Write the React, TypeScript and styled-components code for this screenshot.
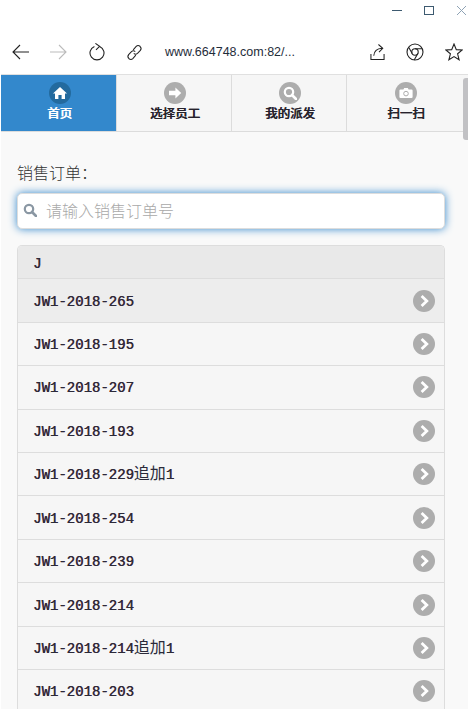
import React from "react";
import styled, { createGlobalStyle } from "styled-components";

const orders = [
  { code: "JW1-2018-265" },
  { code: "JW1-2018-195" },
  { code: "JW1-2018-207" },
  { code: "JW1-2018-193" },
  { code: "JW1-2018-229", extra: "追加" },
  { code: "JW1-2018-254" },
  { code: "JW1-2018-239" },
  { code: "JW1-2018-214" },
  { code: "JW1-2018-214", extra: "追加" },
  { code: "JW1-2018-203" },
];

const HomeIcon = () => (
  <svg width="14" height="14" viewBox="0 0 14 14">
    <path d="M7 1 L14 7.6 L12 7.6 L12 13 L8.6 13 L8.6 9 L5.4 9 L5.4 13 L2 13 L2 7.6 L0 7.6 Z" fill="#fff" />
  </svg>
);

const ArrowIcon = () => (
  <svg width="14" height="14" viewBox="0 0 14 14">
    <path d="M7.4 1.4 L13.2 7 L7.4 12.6 L7.4 9.2 L1 9.2 L1 4.8 L7.4 4.8 Z" fill="#fff" />
  </svg>
);

const SearchIcon = ({ size = 14, color = "#fff" }: { size?: number; color?: string }) => (
  <svg width={size} height={size} viewBox="0 0 14 14">
    <circle cx="6" cy="6" r="4.2" fill="none" stroke={color} strokeWidth="2.2" />
    <path d="M9 9 L13 13" stroke={color} strokeWidth="2.6" strokeLinecap="round" />
  </svg>
);

const CameraIcon = () => (
  <svg width="14" height="14" viewBox="0 0 14 14">
    <path d="M1.5 3.4 H4.4 L5.2 2 H8.8 L9.6 3.4 H12.5 Q13.6 3.4 13.6 4.5 V11 Q13.6 12 12.5 12 H1.5 Q0.4 12 0.4 11 V4.5 Q0.4 3.4 1.5 3.4 Z" fill="#fff" />
    <circle cx="7" cy="7.6" r="2.3" fill="none" stroke="#adadad" strokeWidth="1" />
  </svg>
);

const Chevron = () => (
  <svg width="14" height="14" viewBox="0 0 14 14">
    <path d="M4.6 2 L9.8 7 L4.6 12" fill="none" stroke="#fff" strokeWidth="2.8" />
  </svg>
);

export default function App() {
  return (
    <Page>
      <GlobalStyle />
      <WindowBar>
        <svg width="76" height="14" viewBox="0 0 76 14">
          <path d="M0 6.5 H10" stroke="#3d5a70" strokeWidth="1" />
          <rect x="32.5" y="2.5" width="9" height="8" fill="none" stroke="#3d5a70" strokeWidth="1" />
          <path d="M65 2 L74 11 M74 2 L65 11" stroke="#8fa3b5" strokeWidth="1" />
        </svg>
      </WindowBar>
      <Toolbar>
        <ToolIcon>
          <svg width="17" height="16" viewBox="0 0 17 16">
            <path d="M17 8 H1 M8 1 L1 8 L8 15" fill="none" stroke="#222" strokeWidth="1.1" />
          </svg>
        </ToolIcon>
        <ToolIcon>
          <svg width="17" height="16" viewBox="0 0 17 16">
            <path d="M0 8 H16 M9 1 L16 8 L9 15" fill="none" stroke="#bbb" strokeWidth="1.1" />
          </svg>
        </ToolIcon>
        <ToolIcon>
          <svg width="16" height="18" viewBox="0 0 16 18">
            <path d="M10.6 3.4 A7 7 0 1 1 5.4 3.4" fill="none" stroke="#222" strokeWidth="1.1" />
            <path d="M6.4 0.4 L10.6 3.4 L7 6.8" fill="none" stroke="#222" strokeWidth="1.1" />
          </svg>
        </ToolIcon>
        <ToolIcon>
          <svg width="17" height="17" viewBox="0 0 18 18">
            <path d="M7.6 6.2 L10.8 2.6 Q12.6 0.8 14.8 2.4 Q17 4.4 15.2 6.8 L12.2 10 Q10.2 11.6 8.2 10" fill="none" stroke="#222" strokeWidth="1.1" />
            <path d="M10.4 11.8 L7.2 15.4 Q5.4 17.2 3.2 15.6 Q1 13.6 2.8 11.2 L5.8 8 Q7.8 6.4 9.8 8" fill="none" stroke="#222" strokeWidth="1.1" />
          </svg>
        </ToolIcon>
        <Address>www.664748.com:82/...</Address>
        <ToolActions>
          <svg width="15" height="18" viewBox="0 0 16 18">
            <path d="M1 11 V17 H15 V11" fill="none" stroke="#222" strokeWidth="1.1" />
            <path d="M4 13 Q4.5 5.5 13 5 M9 1 L13.6 5 L9.6 9.2" fill="none" stroke="#222" strokeWidth="1.1" />
          </svg>
          <svg width="18" height="18" viewBox="0 0 18 18">
            <circle cx="9" cy="9" r="8" fill="none" stroke="#222" strokeWidth="1.1" />
            <circle cx="9" cy="9" r="3.2" fill="none" stroke="#222" strokeWidth="1.1" />
            <path d="M9 5.8 H16 M6.2 10.6 L2.8 4.4 M11.8 10.6 L8.2 17" fill="none" stroke="#222" strokeWidth="1.1" />
          </svg>
          <svg width="18" height="18" viewBox="0 0 18 18">
            <path d="M9 1 L11.3 6.6 L17.2 7 L12.6 10.8 L14.1 16.8 L9 13.6 L3.9 16.8 L5.4 10.8 L0.8 7 L6.7 6.6 Z" fill="none" stroke="#222" strokeWidth="1.1" />
          </svg>
        </ToolActions>
      </Toolbar>

      <Scrollbar />

      <NavBar>
        <NavItem $active>
          <NavIcon $active>
            <HomeIcon />
          </NavIcon>
          首页
        </NavItem>
        <NavItem>
          <NavIcon>
            <ArrowIcon />
          </NavIcon>
          选择员工
        </NavItem>
        <NavItem>
          <NavIcon>
            <SearchIcon />
          </NavIcon>
          我的派发
        </NavItem>
        <NavItem>
          <NavIcon>
            <CameraIcon />
          </NavIcon>
          扫一扫
        </NavItem>
      </NavBar>

      <Content>
        <FieldLabel>销售订单：</FieldLabel>
        <SearchBox>
          <SearchIcon size={14} color="#8a97a3" />
          <SearchInput placeholder="请输入销售订单号" />
        </SearchBox>
        <OrderList>
          <Divider>J</Divider>
          {orders.map((order, i) => (
            <OrderRow key={i} $hover={i === 0}>
              <OrderName>
                {order.code}
                {order.extra && (
                  <>
                    <OrderExtra>{order.extra}</OrderExtra>1
                  </>
                )}
              </OrderName>
              <RowArrow>
                <Chevron />
              </RowArrow>
            </OrderRow>
          ))}
        </OrderList>
      </Content>
    </Page>
  );
}

const GlobalStyle = createGlobalStyle`
  html, body {
    margin: 0;
    padding: 0;
    background: #fff;
    overflow: hidden;
  }
  * {
    box-sizing: border-box;
  }
`;

const Page = styled.div`
  position: relative;
  width: 468px;
  height: 709px;
  overflow: hidden;
  background: #fff;
  font-family: "Liberation Sans", "Noto Sans CJK SC", sans-serif;
`;

const WindowBar = styled.div`
  height: 22px;
  padding-top: 4px;
  display: flex;
  justify-content: flex-end;
`;

const Toolbar = styled.div`
  height: 53px;
  display: flex;
  align-items: center;
  padding: 8px 0 0 11px;
  gap: 21px;
  border-bottom: 1px solid #e0e0e0;
  margin-left: 1px;
`;

const ToolIcon = styled.div`
  width: 17px;
  height: 20px;
  display: flex;
  align-items: center;
  justify-content: center;
`;

const Address = styled.div`
  font-size: 12.5px;
  color: #1f2d3a;
  flex: 1;
  white-space: nowrap;
  margin-left: 1px;
`;

const ToolActions = styled.div`
  display: flex;
  align-items: center;
  gap: 21px;
  padding-right: 5px;
`;

const Scrollbar = styled.div`
  position: absolute;
  top: 78px;
  right: 0;
  width: 5px;
  height: 62px;
  border-radius: 3px 0 0 3px;
  background: #c1c1c4;
  z-index: 2;
`;

const NavBar = styled.nav`
  display: grid;
  grid-template-columns: 116px 115px 115px 116px;
  height: 57px;
  margin-left: 1px;
  width: 467px;
  background: #f6f6f6;
  border-bottom: 1px solid #dcdcdc;
`;

const NavItem = styled.div<{ $active?: boolean }>`
  display: flex;
  flex-direction: column;
  align-items: center;
  padding: 7px 0 0 2px;
  gap: 1px;
  font-size: 12.5px;
  line-height: 16px;
  font-weight: 500;
  font-family: "Noto Sans CJK SC", sans-serif;
  color: ${(p) => (p.$active ? "#fff" : "#26222c")};
  text-shadow: 0.4px 0 0 currentColor;
  background: ${(p) => (p.$active ? "#3388cc" : "#f6f6f6")};
  border-right: 1px solid #dcdcdc;

  &:last-child {
    border-right: 0;
  }
`;

const NavIcon = styled.span<{ $active?: boolean }>`
  width: 22px;
  height: 22px;
  border-radius: 50%;
  display: flex;
  align-items: center;
  justify-content: center;
  background: ${(p) => (p.$active ? "#236a9e" : "#adadad")};
`;

const Content = styled.main`
  height: 577px;
  padding: 30px 23px 0 16px;
  margin-left: 1px;
  background: #f9f9f9;
`;

const FieldLabel = styled.div`
  font-size: 16px;
  line-height: 20px;
  color: #333;
  font-family: "Noto Sans CJK SC", sans-serif;
  font-weight: 300;
`;

const SearchBox = styled.div`
  margin-top: 11px;
  height: 36px;
  width: 428px;
  display: flex;
  align-items: center;
  gap: 9px;
  padding: 0 0 2px 5px;
  background: #fff;
  border-radius: 5px;
  border: 1px solid #ddd;
  box-shadow: 0 0 8px #38c;
`;

const SearchInput = styled.input`
  flex: 1;
  min-width: 0;
  border: 0;
  outline: none;
  background: transparent;
  font-size: 16px;
  font-family: "Noto Sans CJK SC", sans-serif;
  font-weight: 300;
  color: #333;
  padding: 0;

  &::placeholder {
    color: #a9a9a9;
    opacity: 1;
  }
`;

const OrderList = styled.div`
  margin-top: 16px;
  width: 428px;
  border: 1px solid #ddd;
  border-bottom: 0;
  border-radius: 5px 5px 0 0;
  overflow: hidden;
`;

const Divider = styled.div`
  height: 32.3px;
  padding: 3px 0 0 15px;
  display: flex;
  align-items: center;
  background: #e9e9e9;
  font-family: "Liberation Mono", monospace;
  font-size: 14px;
  color: #2a2a3a;
  text-shadow: 0.5px 0 0 #5a2a3a;
`;

const OrderRow = styled.div<{ $hover?: boolean }>`
  height: 43.44px;
  padding: 0 9px 0 15px;
  display: flex;
  align-items: center;
  justify-content: space-between;
  border-top: 1px solid #ddd;
  background: ${(p) => (p.$hover ? "#ededed" : "#f6f6f6")};
`;

const OrderName = styled.span`
  font-family: "Liberation Mono", "Noto Sans CJK SC", monospace;
  font-size: 14px;
  line-height: 20px;
  height: 20px;
  padding-top: 1px;
  color: #2a2a3a;
  text-shadow: 0.5px 0 0 #5a2a3a;
  white-space: nowrap;
`;

const OrderExtra = styled.span`
  font-family: "Noto Sans CJK SC", sans-serif;
  font-size: 16px;
  line-height: 0;
  text-shadow: none;
`;

const RowArrow = styled.span`
  width: 22px;
  height: 22px;
  border-radius: 50%;
  display: flex;
  align-items: center;
  justify-content: center;
  background: #adadad;
`;
